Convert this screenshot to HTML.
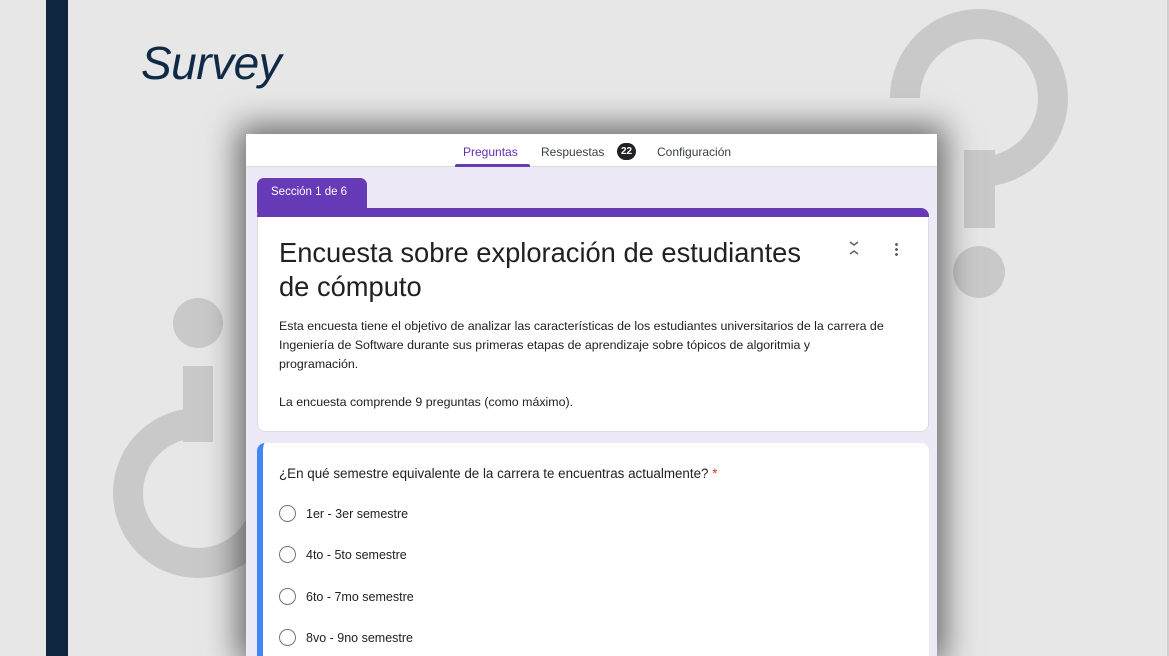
<!DOCTYPE html>
<html><head><meta charset="utf-8"><style>
*{margin:0;padding:0;box-sizing:border-box}
html,body{width:1169px;height:656px;overflow:hidden}
body{background:#e7e7e7;position:relative;font-family:"Liberation Sans",sans-serif}
.a{position:absolute}
.card{left:246px;top:134px;width:691px;height:522px;background:#eee9f7;box-shadow:0 0 30px 8px rgba(0,0,0,.55);overflow:hidden}
.t{font-size:12px;color:#202124;white-space:nowrap}
.o{font-size:12.5px;color:#202124;white-space:nowrap}
.radio{width:17px;height:17px;border:1.5px solid #757575;border-radius:50%}
</style></head><body>
<div class="a" style="left:46px;top:0;width:22px;height:656px;background:#0f2640"></div>
<div class="a" style="left:1167px;top:0;width:2px;height:656px;background:#d0d0d0"></div>
<div class="a" style="left:141px;top:36px;font-size:46px;font-style:italic;color:#0f2a47;letter-spacing:-0.5px">Survey</div>
<svg class="a" style="left:0;top:0" width="1169" height="656">
<g fill="none" stroke="#c9c9c9" stroke-width="30">
<path d="M905 98 A74 74 0 1 1 979 172"/>
<path d="M268 493 A70 70 0 1 1 198 423"/>
</g>
<g fill="#c9c9c9">
<rect x="964" y="150" width="31" height="78"/>
<circle cx="979" cy="272" r="26"/>
<rect x="183" y="366" width="30" height="76"/>
<circle cx="198" cy="323" r="25"/>
</g>
</svg>
<div class="a card">
 <div class="a" style="left:0;top:0;width:691px;height:33px;background:#fff;border-bottom:1px solid #dadce0"></div>
 <div class="a t" style="left:217px;top:11px;color:#5f2eb1">Preguntas</div>
 <div class="a" style="left:209px;top:30px;width:75px;height:3px;background:#673ab7;border-radius:2px 2px 0 0"></div>
 <div class="a t" style="left:295px;top:11px;color:#3c4043">Respuestas</div>
 <div class="a" style="left:371px;top:9px;width:19px;height:17px;border-radius:9px;background:#202124;color:#fff;font-size:10px;font-weight:bold;text-align:center;line-height:17px">22</div>
 <div class="a t" style="left:411px;top:11px;color:#3c4043">Configuración</div>
 <div class="a" style="left:11px;top:44px;width:110px;height:35px;background:#673ab7;border-radius:7px 7px 0 0"></div>
 <div class="a t" style="left:25px;top:52px;color:#fff;font-size:11.5px">Sección 1 de 6</div>
 <div class="a" style="left:11px;top:74px;width:672px;height:11px;background:#673ab7;border-radius:8px 8px 0 0"></div>
 <div class="a" style="left:11px;top:83px;width:672px;height:215px;background:#fff;border-radius:0 0 8px 8px;border:1px solid #dadce0;border-top:none"></div>
 <div class="a" style="left:33px;top:102px;font-size:27.3px;color:#202124;line-height:34px;width:545px">Encuesta sobre exploración de estudiantes de cómputo</div>
 <svg class="a" style="left:602px;top:106px" width="12" height="16"><path d="M2 2l4 3 4-3M2 14l4-3 4 3" fill="none" stroke="#5f6368" stroke-width="1.5"/></svg>
 <div class="a" style="left:649px;top:108px;width:3px;height:15px;background:radial-gradient(circle,#5f6368 1.3px,transparent 1.6px) 0 0/3px 5px"></div>
 <div class="a" style="left:33px;top:183px;font-size:12.4px;color:#202124;line-height:19px;white-space:nowrap">Esta encuesta tiene el objetivo de analizar las características de los estudiantes universitarios de la carrera de<br>Ingeniería de Software durante sus primeras etapas de aprendizaje sobre tópicos de algoritmia y<br>programación.<br><br>La encuesta comprende 9 preguntas (como máximo).</div>
 <div class="a" style="left:11px;top:309px;width:672px;height:240px;background:#fff;border-radius:8px;border-left:6px solid #4285f4"></div>
 <div class="a t" style="left:33px;top:332px;font-size:13.4px">¿En qué semestre equivalente de la carrera te encuentras actualmente? <span style="color:#d93025">*</span></div>
 <div class="a radio" style="left:33px;top:371px"></div><div class="a o" style="left:60px;top:373px">1er - 3er semestre</div>
 <div class="a radio" style="left:33px;top:412px"></div><div class="a o" style="left:60px;top:414px">4to - 5to semestre</div>
 <div class="a radio" style="left:33px;top:454px"></div><div class="a o" style="left:60px;top:456px">6to - 7mo semestre</div>
 <div class="a radio" style="left:33px;top:495px"></div><div class="a o" style="left:60px;top:497px">8vo - 9no semestre</div>
</div>
</body></html>
